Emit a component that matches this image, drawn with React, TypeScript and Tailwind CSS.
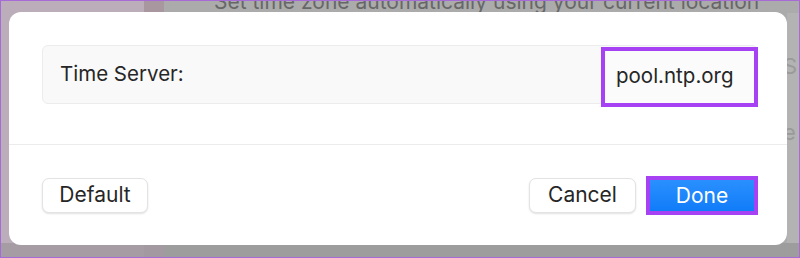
export default function App() {
  return (
    <div
      className="relative w-[800px] h-[258px] overflow-hidden border border-[#a66bd6]"
      style={{ fontFamily: "Inter, 'Liberation Sans', sans-serif" }}
    >
      {/* dimmed window behind the sheet */}
      <div className="absolute inset-0 flex">
        <div className="w-[143px] flex flex-col">
          <div className="flex-1 bg-[#bbadb9]" />
          <div className="h-[14px] bg-[#a69ca4]" />
        </div>
        <div className="w-[20px] flex flex-col">
          <div className="flex-1 bg-[#a8979f]" />
          <div className="h-[14px] bg-[#a39aa1]" />
        </div>
        <div className="flex-1 flex flex-col bg-[#ababab]">
          <div className="h-[12px] overflow-hidden relative">
            <div className="absolute left-[50px] -top-[12px] text-[21px] leading-[25px] text-[#676767] whitespace-nowrap">
              Set time zone automatically using your current location
            </div>
          </div>
          <div className="flex-1 flex justify-end">
            <div className="w-[12px] bg-[#b3b3b3] overflow-hidden text-[22px] text-[#9a9a9a] leading-none pt-[42px] flex flex-col gap-[44px]">
              <span className="-ml-[4px]">S</span>
              <span className="-ml-[4px]">e</span>
            </div>
          </div>
          <div className="h-[14px] bg-[#9d9d9d]" />
        </div>
      </div>

      {/* sheet */}
      <div className="absolute left-[8px] top-[11px] w-[778px] h-[233px] bg-white rounded-[12px] flex flex-col">
        <div className="h-[133px] pl-[33px] pr-[29px] pt-[33px] border-b border-[#ececec]">
          <div className="h-[59px] flex items-center justify-between bg-[#f9f9f9] border border-[#ececec] rounded-[6px] pl-[17px]">
            <span className="text-[20.5px] text-[#262626]">Time Server:</span>
            <div className="relative top-[2px] -mr-px h-[60px] w-[157px] border-4 border-[#a642f4] bg-[#fbfbfb] flex items-center pl-[11px]">
              <span className="text-[20.5px] text-[#262626]">pool.ntp.org</span>
            </div>
          </div>
        </div>
        <div className="flex-1 pl-[33px] pr-[29px] flex items-center justify-between">
          <button className="h-[35px] w-[106px] rounded-[7px] bg-white border border-[#e3e3e3] shadow-[0_1px_2px_rgba(0,0,0,0.12)] text-[21px] text-[#262626]">
            Default
          </button>
          <div className="flex items-center gap-[10px]">
            <button className="h-[35px] w-[107px] rounded-[7px] bg-white border border-[#e3e3e3] shadow-[0_1px_2px_rgba(0,0,0,0.12)] text-[21px] text-[#262626]">
              Cancel
            </button>
            <div className="border-4 border-[#a642f4]">
              <button className="block h-[31px] w-[104px] bg-gradient-to-b from-[#2a90ff] to-[#0f7cf8] text-[21px] text-white">
                Done
              </button>
            </div>
          </div>
        </div>
      </div>
    </div>
  );
}
